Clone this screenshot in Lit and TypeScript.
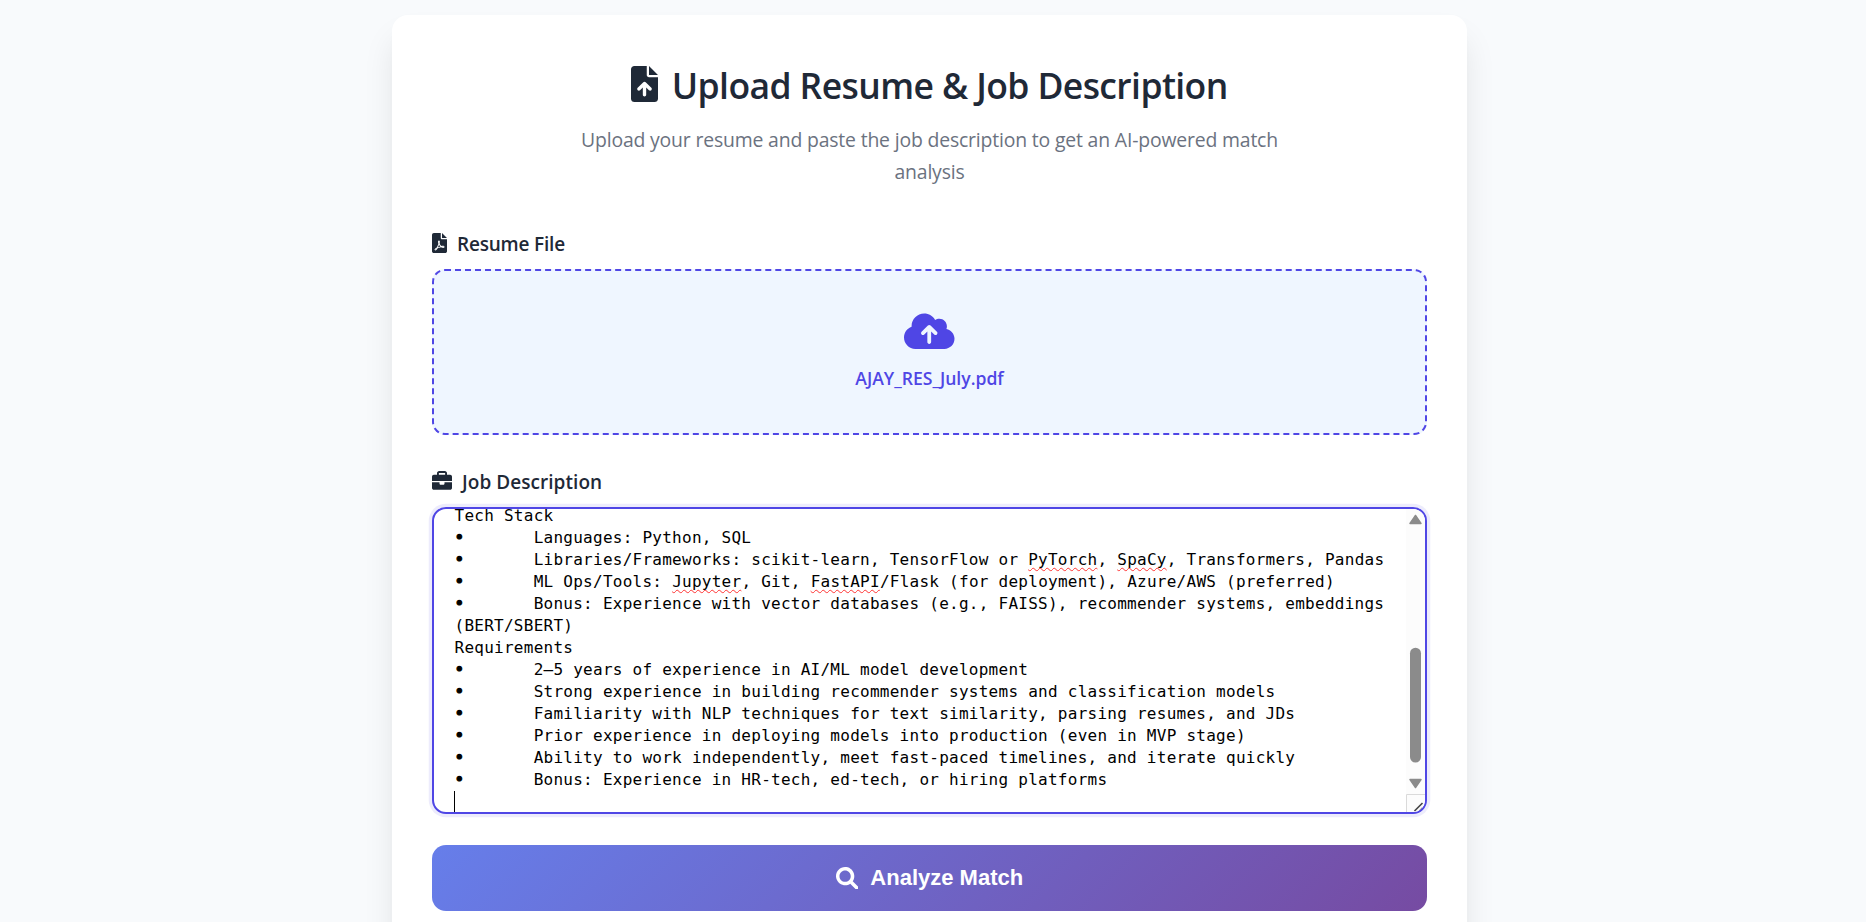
import { LitElement, html, css, svg } from "lit";
import { customElement } from "lit/decorators.js";

const FILE_BODY =
  "M256 0v128h128L256 0zM224 128V0H48C21.5 0 0 21.5 0 48v416c0 26.500 21.500 48 48 48h288c26.500 0 48-21.500 48-48V160H256c-17.700 0-32-14.300-32-32z";

const ICONS = {
  fileUp: {
    box: "0 0 384 512",
    d: FILE_BODY +
      "M289 345c-4.700 4.700-10.800 7-17 7s-12.300-2.300-17-7l-39-39.100V408c0 13.300-10.700 24-24 24s-24-10.700-24-24V305.900l-39 39.100c-9.400 9.400-24.600 9.400-33.900 0s-9.400-24.600 0-33.900l80-80c9.400-9.400 24.600-9.400 33.900 0l80 80c9.300 9.300 9.300 24.500 0 33.900z",
  },
  filePdf: {
    box: "0 0 384 512",
    d: FILE_BODY +
      "M240 331.800c-20-12.200-33.300-29-42.700-53.800 4.500-18.500 11.600-46.600 6.200-64.200-4.700-29.400-42.400-26.500-47.800-6.800-5 18.300-.4 44.100 8.100 77-11.600 27.600-28.700 64.600-40.800 85.800-.1 0-.1.1-.2.1-27.100 13.900-73.600 44.500-54.500 68 5.600 6.900 16 10 21.500 10 17.900 0 35.700-18 61.100-61.800 25.800-8.500 54.100-19.100 79-23.200 21.700 11.800 47.100 19.500 64 19.500 29.200 0 31.200-32 19.700-43.400-13.900-13.600-54.300-9.700-73.600-7.200z" +
      "M181.900 256.100c-5-16-4.900-46.900-2-46.900 8.400 0 7.600 36.900 2 46.900zM180.200 303.300c-7.700 20.200-17.300 43.300-28.400 62.700 18.300-7 39-17.200 62.900-21.900-12.700-9.600-24.900-23.400-34.500-40.800zM86.100 428.100c0 .8 13.200-5.400 34.900-40.200-6.700 6.300-29.100 24.500-34.900 40.200zM302.900 360.300c4.100-2.700-2.500-11.900-42.800-9 37.100 15.800 42.800 9 42.800 9z",
  },
  cloudUp: {
    box: "0 0 640 512",
    d: "M144 480C64.500 480 0 415.500 0 336c0-62.800 40.200-116.200 96.200-135.900C96.100 197.400 96 194.700 96 192c0-88.400 71.600-160 160-160 59.300 0 111 32.200 138.700 80.200C409.900 102 428.300 96 448 96c53 0 96 43 96 96 0 12.200-2.300 23.800-6.400 34.600C596 238.400 640 290.100 640 352c0 70.700-57.300 128-128 128H144zM223 263c-9.400 9.400-9.400 24.600 0 33.900s24.600 9.400 33.900 0l39-39V392c0 13.300 10.700 24 24 24s24-10.700 24-24V257.900l39 39c9.400 9.400 24.600 9.400 33.900 0s9.400-24.600 0-33.900l-80-80c-9.400-9.400-24.600-9.400-33.900 0l-80 80z",
  },
  briefcase: {
    box: "0 0 512 512",
    d: "M184 48h144c4.400 0 8 3.600 8 8v40H176V56c0-4.400 3.600-8 8-8zm-56 8v40H48C22 96 0 118 0 144v112h512V144c0-26-22-48-48-48h-80V56c0-30.900-25.100-56-56-56H184c-30.900 0-56 25.100-56 56zM512 288H320v32c0 17.700-14.300 32-32 32h-64c-17.700 0-32-14.300-32-32v-32H0v144c0 26 22 48 48 48h416c26 0 48-22 48-48V288z",
  },
  search: {
    box: "0 0 512 512",
    d: "M500.300 443.700l-119.700-119.700c27.200-40.400 40.600-90.900 33.500-144.700C401.800 87.800 326.800 13.300 235.200 1.700 99-15.500-15.500 99 1.700 235.200c11.600 91.600 86.100 166.700 177.600 178.900 53.800 7.200 104.300-6.200 144.700-33.500l119.700 119.700c15.600 15.600 41 15.600 56.600 0s15.600-41 0-56.600zM79.100 208c0-70.600 57.400-128 128-128s128 57.400 128 128-57.400 128-128 128-128-57.400-128-128z",
  },
};

const icon = (name: keyof typeof ICONS, cls: string) => html`
  <svg class="icon ${cls}" viewBox=${ICONS[name].box} aria-hidden="true">
    ${svg`<path fill="currentColor" fill-rule="evenodd" d=${ICONS[name].d}></path>`}
  </svg>`;

/* Words between tildes are flagged by the spell checker. */
const LINES = [
  "Tech Stack",
  "•\tLanguages: Python, SQL",
  "•\tLibraries/Frameworks: scikit-learn, TensorFlow or ~PyTorch~, ~SpaCy~, Transformers, Pandas",
  "•\tML Ops/Tools: ~Jupyter~, Git, ~FastAPI~/Flask (for deployment), Azure/AWS (preferred)",
  "•\tBonus: Experience with vector databases (e.g., FAISS), recommender systems, embeddings",
  "(BERT/SBERT)",
  "Requirements",
  "•\t2–5 years of experience in AI/ML model development",
  "•\tStrong experience in building recommender systems and classification models",
  "•\tFamiliarity with NLP techniques for text similarity, parsing resumes, and JDs",
  "•\tPrior experience in deploying models into production (even in MVP stage)",
  "•\tAbility to work independently, meet fast-paced timelines, and iterate quickly",
  "•\tBonus: Experience in HR-tech, ed-tech, or hiring platforms",
];

@customElement("app-root")
export class AppRoot extends LitElement {
  static styles = css`
    :host {
      display: block;
      height: 922px;
      overflow: hidden;
      background: #f8fafc;
      font-family: "Open Sans", "Noto Sans", sans-serif;
      color: #1f2937;
    }
    * { box-sizing: border-box; }
    .icon { display: block; flex: none; }
    .card {
      width: 1075px;
      height: 960px;
      margin: 14.500px 0 0 392px;
      padding: 44px 40px 0;
      border-radius: 16px;
      background: #fff;
      box-shadow: 0 22px 33px -3px rgba(0, 0, 0, 0.1), 0 9px 11px -5px rgba(0, 0, 0, 0.04);
    }
    .title {
      display: flex;
      justify-content: center;
      align-items: center;
      gap: 13.500px;
      height: 53px;
      margin: 0;
      font-size: 35.500px;
      font-weight: 600;
      line-height: 53px;
      letter-spacing: -0.600px;
      white-space: nowrap;
    }
    .i-title { width: 27px; height: 36px; margin-top: -3px; }
    .sub {
      width: 704px;
      margin: 12.500px auto 0;
      text-align: center;
      color: #6b7280;
      font-size: 19.400px;
      letter-spacing: -0.170px;
      line-height: 32px;
    }
    .label {
      display: flex;
      align-items: center;
      height: 30px;
      font-size: 19px;
      font-weight: 600;
      line-height: 30px;
      white-space: nowrap;
    }
    .l-file { margin-top: 41px; gap: 10px; letter-spacing: -0.200px; }
    .l-job { margin-top: 32px; gap: 10px; letter-spacing: 0.050px; }
    .i-pdf { width: 15px; height: 20px; margin-top: -3px; }
    .i-case { width: 20px; height: 20px; margin-top: -3px; }
    .drop {
      display: flex;
      flex-direction: column;
      align-items: center;
      height: 166px;
      margin-top: 10px;
      padding-top: 40px;
      border: 2px dashed #4f46e5;
      border-radius: 13px;
      background: #eff6ff;
      color: #4f46e5;
    }
    .i-cloud { width: 50.500px; height: 40.500px; }
    .file { margin-top: 12.500px; font-size: 17.600px; font-weight: 600; line-height: 28px; }
    .area {
      display: flex;
      height: 307px;
      margin-top: 10px;
      border: 2px solid #4f46e5;
      border-radius: 14px;
      background: #fff;
      box-shadow: 0 0 0 3.300px rgba(79, 70, 229, 0.1);
      color: #000;
      overflow: hidden;
    }
    .text {
      display: flex;
      flex-direction: column;
      justify-content: flex-end;
      flex: 1;
      padding-left: 20.500px;
      font-family: "DejaVu Sans Mono", "Liberation Mono", monospace;
      font-size: 16px;
      letter-spacing: 0.258px;
    }
    .line { flex: none; height: 22px; line-height: 22px; white-space: pre; tab-size: 8; }
    .dot { -webkit-text-stroke: 1.200px #000; }
    .bad { text-decoration: underline wavy #f33 1.300px; text-underline-offset: 1.500px; text-decoration-skip-ink: none; }
    .caret { flex: none; width: 1px; height: 21.400px; margin-left: -0.800px; background: #000; }
    .scroll { display: flex; flex-direction: column; flex: none; width: 19px; background: #fcfcfc; }
    .bar { flex: none; width: 19px; height: 284.500px; }
    .grip { flex: none; width: 19px; height: 19px; }
    .go {
      display: flex;
      justify-content: center;
      align-items: center;
      gap: 12px;
      width: 995px;
      height: 66px;
      margin-top: 31px;
      padding: 0;
      border: 0;
      border-radius: 14px;
      background: linear-gradient(135deg, #667eea 0%, #764ba2 100%);
      color: #fff;
      font: 700 22px "Liberation Sans", Arial, sans-serif;
    }
    .i-search { width: 22.500px; height: 22.500px; }
  `;

  private line(text: string) {
    const bullet = text.startsWith("•");
    const rest = bullet ? text.slice(1) : text;
    return html`<div class="line">${bullet ? html`<span class="dot">•</span>` : ""}${rest
      .split("~")
      .map((part, i) => (i % 2 ? html`<span class="bad">${part}</span>` : part))}</div>`;
  }

  render() {
    return html`
      <main class="card">
        <h1 class="title">${icon("fileUp", "i-title")}<span>Upload Resume &amp; Job Description</span></h1>
        <p class="sub">Upload your resume and paste the job description to get an AI-powered match analysis</p>
        <div class="label l-file">${icon("filePdf", "i-pdf")}<span>Resume File</span></div>
        <div class="drop">${icon("cloudUp", "i-cloud")}<span class="file">AJAY_RES_July.pdf</span></div>
        <div class="label l-job">${icon("briefcase", "i-case")}<span>Job Description</span></div>
        <div class="area">
          <div class="text">${LINES.map((l) => this.line(l))}<div class="caret"></div></div>
          <div class="scroll">
            <svg class="bar" viewBox="0 0 19 285">
              <path d="M9.500 6.500 15 14.500H4z" fill="#8b8b8b" stroke="#8b8b8b" stroke-width="1.500" stroke-linejoin="round" />
              <rect x="4" y="139" width="11" height="115" rx="5.500" fill="#8b8b8b" />
              <path d="M9.500 279 15 271H4z" fill="#8b8b8b" stroke="#8b8b8b" stroke-width="1.500" stroke-linejoin="round" />
            </svg>
            <svg class="grip" viewBox="0 0 19 19">
              <path d="M.5 19V.5H19" fill="#fcfcfc" stroke="#dadada" />
              <path d="M8.500 17 16.500 9M13.500 17l3-3" fill="none" stroke="#444" stroke-width="1.600" />
            </svg>
          </div>
        </div>
        <button class="go">${icon("search", "i-search")}<span>Analyze Match</span></button>
      </main>
    `;
  }
}
